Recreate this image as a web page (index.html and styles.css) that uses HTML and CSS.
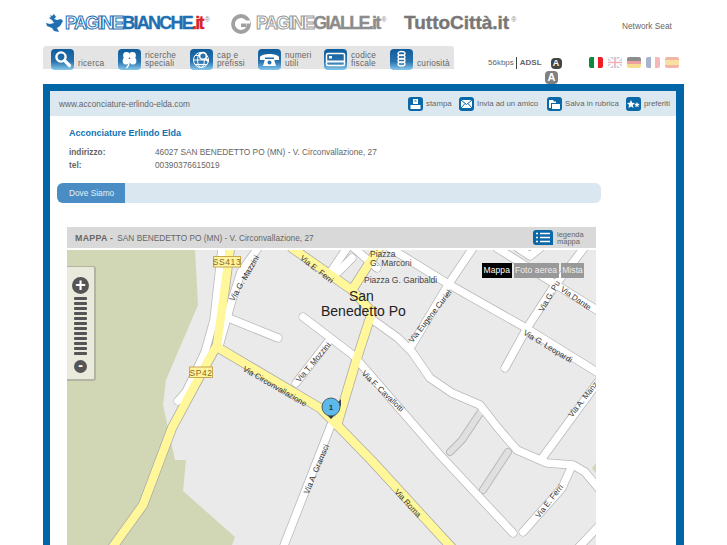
FILE: index.html
```html
<!DOCTYPE html>
<html lang="en">
  <head>
    <title>Acconciature Erlindo Elda</title>
    <link rel="stylesheet" href="styles.css">
  </head>
  <body>
    <div class="page">
      <div class="logos">
        <div class="logo logo-pb">
          <svg class="logo-mark" width="18" height="19" viewBox="0 0 18 19"><path fill="#1f6fb2" d="M9 0l2 3-2 2 3 1 4-1 2 2-3 5-3 2 2 4-5-1-2-3-5-2-1-3 4 1 4-1-2-3-3-2 2-1-1-2 2 1z"/></svg>
          <span class="logo-name"><span class="outline">PAGINE</span>BIANCHE<span class="red">.it</span></span><sup class="reg">®</sup>
        </div>
        <div class="logo logo-pg">
          <svg class="logo-mark" width="20" height="20" viewBox="0 0 20 20"><circle cx="10" cy="10" r="8" fill="none" stroke="#a0a0a0" stroke-width="3.800"/><path d="M10 6.500h9v3h-9z" fill="#fff"/><path d="M10 9.500h5.500v3.500H10z" fill="#a0a0a0"/></svg>
          <span class="logo-name"><span class="outline">PAGINE</span>GIALLE.it</span><sup class="reg">®</sup>
        </div>
        <div class="logo logo-tc">
          <span class="logo-name">TuttoCittà.it</span><sup class="reg">®</sup>
        </div>
        <div class="network">Network Seat</div>
      </div>

      <div class="toprow">
        <div class="nav">
          <a class="nav-item">
            <span class="nav-icon"><svg width="23" height="21" viewBox="0 0 23 21"><circle cx="10" cy="8" r="4.600" fill="none" stroke="#fff" stroke-width="2.400"/><path d="M13.500 11.500l5 5" stroke="#fff" stroke-width="3.200" stroke-linecap="round"/></svg></span>
            <span class="nav-label">ricerca</span>
          </a>
          <a class="nav-item">
            <span class="nav-icon"><svg width="23" height="21" viewBox="0 0 23 21"><g fill="#fff"><circle cx="8.500" cy="6.500" r="3.400"/><circle cx="14.500" cy="6.500" r="3.400"/><circle cx="8" cy="12" r="3.400"/><circle cx="15" cy="12" r="3.400"/></g><path d="M11.500 10c0 4-1 7-3 9" stroke="#fff" stroke-width="1.400" fill="none"/></svg></span>
            <span class="nav-label">ricerche<br>speciali</span>
          </a>
          <a class="nav-item">
            <span class="nav-icon"><svg width="23" height="21" viewBox="0 0 23 21"><g fill="none" stroke="#fff"><circle cx="11" cy="11" r="7.500"/><ellipse cx="11" cy="11" rx="3.400" ry="7.500"/><path d="M3.500 11h15M5 6.500h12M5 15.500h12"/></g><circle cx="13" cy="7" r="3.400" fill="#2a72ad" stroke="#fff" stroke-width="1.600"/><path d="M15.500 9.500l3 3" stroke="#fff" stroke-width="2"/></svg></span>
            <span class="nav-label">cap e<br>prefissi</span>
          </a>
          <a class="nav-item">
            <span class="nav-icon"><svg width="23" height="21" viewBox="0 0 23 21"><path fill="#fff" d="M2 8c2-4 17-4 19 0v3h-5V8.500H7V11H2z"/><path fill="#fff" d="M7 10h9l2 7H5z"/><circle cx="11.500" cy="13.500" r="2" fill="#2a72ad"/></svg></span>
            <span class="nav-label">numeri<br>utili</span>
          </a>
          <a class="nav-item">
            <span class="nav-icon"><svg width="23" height="21" viewBox="0 0 23 21"><rect x="2.500" y="4.500" width="18" height="12" rx="1.500" fill="none" stroke="#fff" stroke-width="1.500"/><path d="M3 12.500h17" stroke="#fff" stroke-width="2"/><rect x="5" y="7" width="3" height="2.500" fill="#fff"/></svg></span>
            <span class="nav-label">codice<br>fiscale</span>
          </a>
          <a class="nav-item">
            <span class="nav-icon"><svg width="23" height="21" viewBox="0 0 23 21"><g fill="none" stroke="#fff" stroke-width="1.300"><ellipse cx="11.500" cy="4.500" rx="3.500" ry="2"/><ellipse cx="11.500" cy="8" rx="3.500" ry="2"/><ellipse cx="11.500" cy="11.500" rx="3.500" ry="2"/><ellipse cx="11.500" cy="15" rx="3.500" ry="2"/></g></svg></span>
            <span class="nav-label">curiosità</span>
          </a>
        </div>

        <div class="speed">
          <div class="speed-line">
            <span>56kbps</span><span class="speed-sep">ADSL</span>
            <span class="font-a font-a-dark">A</span>
          </div>
          <span class="font-a font-a-grey">A</span>
        </div>

        <div class="flags">
          <span class="flag flag-it"></span>
          <span class="flag flag-en"><svg width="14" height="11" viewBox="0 0 14 11"><rect width="14" height="11" fill="#c6d0e2"/><path d="M0 0l14 11M14 0L0 11" stroke="#fff" stroke-width="2"/><path d="M7 0v11M0 5.500h14" stroke="#fff" stroke-width="3.400"/><path d="M7 0v11M0 5.500h14" stroke="#eeb0b4" stroke-width="1.600"/></svg></span>
          <span class="flag flag-de"></span>
          <span class="flag flag-fr"></span>
          <span class="flag flag-es"></span>
        </div>
      </div>

      <div class="box">
        <div class="strip">
          <span class="url">www.acconciature-erlindo-elda.com</span>
          <div class="tools">
            <a class="tool">
              <span class="tool-icon"><svg width="15" height="14" viewBox="0 0 15 14"><path fill="#fff" d="M5 2h5v5H5zM2.500 8h10v4h-10z"/><path d="M6.500 4h2" stroke="#0a68a8"/></svg></span>
              <span class="tool-label">stampa</span>
            </a>
            <a class="tool">
              <span class="tool-icon"><svg width="15" height="14" viewBox="0 0 15 14"><rect x="2" y="3" width="11" height="8" fill="#fff"/><path d="M2 3l5.500 4.500L13 3M2 11l4-4.500M13 11L9 6.500" fill="none" stroke="#0a68a8"/></svg></span>
              <span class="tool-label">Invia ad un amico</span>
            </a>
            <a class="tool">
              <span class="tool-icon"><svg width="15" height="14" viewBox="0 0 15 14"><path fill="#fff" d="M2 3h4l1 1.500H9V6H4v5H2z"/><path fill="#fff" d="M5 7h8v5H5z"/></svg></span>
              <span class="tool-label">Salva in rubrica</span>
            </a>
            <a class="tool">
              <span class="tool-icon"><svg width="15" height="14" viewBox="0 0 15 14"><path fill="#fff" d="M5 3l1.200 2.700 2.800.3-2.100 2 .6 2.900L5 9.500l-2.500 1.400.6-2.900L1 6l2.800-.3zM11 5l.8 1.800 1.900.2-1.400 1.300.4 2-1.700-1-1.700 1 .4-2L8.300 7l1.900-.2z"/></svg></span>
              <span class="tool-label">preferiti</span>
            </a>
          </div>
        </div>

        <h1 class="name">Acconciature Erlindo Elda</h1>
        <div class="info">
          <span class="info-key">indirizzo:</span>
          <span>46027 SAN BENEDETTO PO (MN) - V. Circonvallazione, 27</span>
          <span class="info-key">tel:</span>
          <span>00390376615019</span>
        </div>

        <div class="tabs">
          <a class="tab">Dove Siamo</a>
        </div>

        <div class="map-head">
          <span class="map-title">MAPPA -</span>
          <span class="map-addr">SAN BENEDETTO PO (MN) - V. Circonvallazione, 27</span>
          <svg class="legend-icon" width="20" height="15" viewBox="0 0 20 15"><path fill="#0a68a8" d="M3 0h14q3 0 3 3v12H3q-3 0-3-3V3q0-3 3-3z"/><path d="M3 3.500h2M7 3.500h10M3 7.500h2M7 7.500h10M3 11.500h2M7 11.500h10" stroke="#fff" stroke-width="1.500"/></svg>
          <span class="legend-label">legenda<br>mappa</span>
        </div>

        <div class="map">
          <svg class="map-canvas" width="529" height="295" viewBox="67 250 529 295">
            <defs>
              <g id="streets">
                <path d="M222 248L214 320 205 352 186 392 178 401"/>
                <path d="M258 248L241 272 232 300 219 346"/>
                <path d="M231 319L278 338"/>
                <path d="M347 248L330 273"/>
                <path d="M354 248L377 268M352 258L338 272"/>
                <path d="M390 248L450 285 526 328 600 374"/>
                <path d="M473 248L448 285 412 345"/>
                <path d="M373 320L398 338 412 352 430 378 452 393 480 405 498 428 517 450 547 463 573 465 585 472 600 490"/>
                <path d="M303 317L353 355 440 455 513 533"/>
                <path d="M328 342L296 383"/>
                <path d="M331 425L283 548"/>
                <path d="M584 248L553 288 527 328 505 368"/>
                <path d="M497 248L600 312"/>
                <path d="M518 248L530 256 540 248"/>
                <path d="M598 382L543 457"/>
                <path d="M570 470L562 488 523 532"/>
                <path d="M578 548L600 525"/>
              </g>
              <g id="alleys">
                <path d="M480 413L462 440 450 452"/>
                <path d="M508 452L483 490"/>
              </g>
              <g id="mainroads">
                <path d="M230 248L226 280 217 345 195 385 172 428 143 505 112 548"/>
                <path d="M217 347L320 408 340 428 373 462 452 548"/>
                <path d="M292 248L352 290 372 312 357 358 337 425"/>
                <path d="M379 248L352 290"/>
              </g>
            </defs>

            <rect x="67" y="250" width="529" height="295" fill="#eaeaea"/>
            <path class="land" d="M67 250H195L198 305 166 380 163 405 175 460H186L183 491 235 537 232 545H67z"/>
            <path class="land" d="M592 468L597 462V475z"/>

            <use href="#streets" class="street-edge"/>
            <use href="#alleys" class="alley-edge"/>
            <use href="#mainroads" class="main-edge"/>
            <use href="#alleys" class="alley"/>
            <use href="#streets" class="street"/>
            <use href="#mainroads" class="main"/>

            <g class="shield">
              <rect x="213.500" y="256.500" width="27" height="10.500"/>
              <text x="227" y="265">SS413</text>
              <rect x="189.500" y="367" width="23" height="10.500"/>
              <text x="201" y="375.500">SP42</text>
            </g>

            <g class="road-label">
              <text transform="translate(244 278) rotate(-60)" y="3">Via G. Mazzini</text>
              <text transform="translate(317 269) rotate(38)" y="3">Via E. Ferri</text>
              <text transform="translate(275 386) rotate(30)" y="3">Via Circonvallazione</text>
              <text transform="translate(313 362) rotate(-50)" y="3">Via T. Mozzini</text>
              <text transform="translate(430 316) rotate(-52)" y="3">Via Eugene Curiel</text>
              <text transform="translate(549 296) rotate(-60)" y="3">Via G. Pu</text>
              <text transform="translate(576 298) rotate(35)" y="3">Via Dante</text>
              <text transform="translate(548 346) rotate(31)" y="3">Via G. Leopardi</text>
              <text transform="translate(383 391) rotate(44)" y="3">Via F. Cavallotti</text>
              <text transform="translate(316 469) rotate(-67)" y="3">Via A. Gramsci</text>
              <text transform="translate(408 503) rotate(47)" y="3">Via Roma</text>
              <text transform="translate(549 501) rotate(-52)" y="3">Via E. Ferri</text>
              <text transform="translate(586 395) rotate(-52)" y="3">Via A. Manzoni</text>
            </g>

            <g class="place-label">
              <text x="370" y="257">Piazza</text>
              <text x="370" y="266">G. Marconi</text>
              <text x="364" y="283">Piazza G. Garibaldi</text>
            </g>
            <g class="town-label">
              <text x="349" y="301">San</text>
              <text x="321" y="316">Benedetto Po</text>
            </g>

            <path d="M338 402l3 -3v8z" fill="#444"/>
            <path d="M327 415h8l-4 4z" fill="#333"/>
            <circle cx="331" cy="407" r="9" fill="#5db9ea" stroke="#47606e" stroke-width="1"/>
            <text class="marker-num" x="331" y="410">1</text>
          </svg>

          <div class="zoom-ctl">
            <span class="zoom-btn zoom-plus">+</span>
            <div class="zoom-bars">
              <i></i><i></i><i></i><i></i><i></i><i></i><i></i><i></i><i></i><i></i><i></i><i></i>
            </div>
            <span class="zoom-btn zoom-minus">-</span>
          </div>

          <div class="map-types">
            <a class="map-type map-type-on">Mappa</a>
            <a class="map-type">Foto aerea</a>
            <a class="map-type">Mista</a>
          </div>
        </div>
      </div>
    </div>
  </body>
</html>
```

FILE: styles.css
```css
html, body {
  margin: 0;
  height: 545px;
  overflow: hidden;
  background: white;
}

body {
  font-family: "Liberation Sans", Arial, sans-serif;
  font-size: 8.300px;
  color: #666;
}

.page {
  width: 641px;
  margin-left: 43px;
}

/* logos */
.logos {
  display: flex;
  height: 46px;
  position: relative;
}

.logo {
  display: flex;
  align-items: flex-start;
  padding-top: 12px;
  box-sizing: border-box;
}

.logo-pb {
  width: 188px;
  padding-left: 2px;
}

.logo-pg {
  width: 173px;
}

.logo-tc {
  width: 218px;
}

.logo-mark {
  margin-top: 2px;
  margin-right: 2px;
  flex: none;
}

.logo-pg .logo-mark {
  margin-right: 5px;
}

.logo-name {
  font-weight: bold;
  font-size: 18px;
  line-height: 22px;
  letter-spacing: -1.750px;
  white-space: nowrap;
}

.logo-pb .logo-name {
  color: #1f6fb2;
  -webkit-text-stroke: 0.3px #1f6fb2;
}

.logo-pg .logo-name {
  color: #8c8c8c;
  -webkit-text-stroke: 0.3px #8c8c8c;
}

.logo-tc .logo-name {
  color: #777;
  font-size: 19px;
  letter-spacing: 0;
  -webkit-text-stroke: 0.4px #777;
}

.logo .outline {
  color: white;
  -webkit-text-stroke: 1px #1f6fb2;
}

.logo-pg .outline {
  -webkit-text-stroke-color: #999;
}

.logo .red {
  color: #d8232a;
  -webkit-text-stroke-color: #d8232a;
}

.reg {
  font-size: 7px;
  line-height: 8px;
  margin: 4px 0 0 2px;
  color: #888;
}

.network {
  position: absolute;
  left: 579px;
  top: 21px;
  white-space: nowrap;
  color: #666;
}

/* top row */
.toprow {
  display: flex;
  height: 38px;
}

.nav {
  display: grid;
  grid-template-columns: 67px 72px 68px 66px 66px 1fr;
  width: 403px;
  height: 23px;
  padding-left: 8px;
  background: #e4e4e4;
  border-radius: 3px 3px 0 0;
}

.nav-item {
  display: flex;
  align-items: flex-end;
  height: 23px;
}

.nav-icon {
  display: block;
  width: 23px;
  height: 21px;
  margin-bottom: -1px;
  border-radius: 4px;
  background: linear-gradient(#0f5d9c, #2a72ad 60%, #86c8ec);
  flex: none;
}

.nav-icon svg {
  display: block;
}

.nav-label {
  margin-left: 4px;
  margin-bottom: 2px;
  font-size: 8.300px;
  line-height: 8px;
  letter-spacing: 0.2px;
  color: #666;
}

.speed {
  position: relative;
  width: 101px;
  margin-left: 34px;
  padding-top: 11px;
}

.speed-line {
  display: flex;
  align-items: center;
  font-size: 8px;
  line-height: 12px;
}

.speed-sep {
  margin-left: 2px;
  padding-left: 3px;
  border-left: 1px solid #444;
  font-weight: bold;
}

.font-a {
  display: block;
  text-align: center;
  font-weight: bold;
  color: white;
  border-radius: 4px;
}

.font-a-dark {
  width: 11px;
  height: 11px;
  margin-left: 9px;
  font-size: 9px;
  line-height: 11px;
  background: #444;
}

.font-a-grey {
  width: 13px;
  height: 13px;
  margin: 2px 0 0 57px;
  font-size: 11px;
  line-height: 13px;
  background: #808080;
}

.flags {
  display: flex;
  gap: 5px;
  padding-top: 11px;
}

.flag {
  display: block;
  width: 14px;
  height: 11px;
  border-radius: 2px;
  overflow: hidden;
}

.flag svg {
  display: block;
}

.flag-it {
  background: linear-gradient(90deg, #0a8a3a 33%, #fff 33%, #fff 66%, #ee1c25 66%);
}

.flag-de {
  background: linear-gradient(#8c8c8c 33%, #eea0a0 33%, #eea0a0 66%, #f7dc90 66%);
}

.flag-fr {
  background: linear-gradient(90deg, #a8b4cc 33%, #fff 33%, #fff 66%, #f5b8b8 66%);
}

.flag-es {
  background: linear-gradient(#f5b4a8 28%, #f8e0a0 28%, #f8e0a0 72%, #f5b4a8 72%);
}

/* main box */
.box {
  height: 461px;
  box-sizing: border-box;
  border: solid #0066a8;
  border-width: 7px 8px 0 7px;
}

.strip {
  display: flex;
  align-items: center;
  justify-content: space-between;
  height: 25px;
  padding: 0 0 0 9px;
  background: #dce8f0;
}

.tools {
  display: grid;
  grid-template-columns: 51px 88px 79px 50px;
}

.tool {
  display: flex;
  align-items: center;
}

.tool-icon {
  display: block;
  width: 15px;
  height: 14px;
  border-radius: 3px;
  background: #0a68a8;
}

.tool-icon svg {
  display: block;
}

.tool-label {
  margin-left: 3px;
  font-size: 7.800px;
  white-space: nowrap;
}

.name {
  margin: 11px 0 0 19px;
  font-size: 9px;
  line-height: 12px;
  color: #0f72b4;
}

.info {
  display: grid;
  grid-template-columns: 86px 1fr;
  row-gap: 3px;
  margin: 8px 0 0 19px;
  line-height: 10px;
}

.info-key {
  font-weight: bold;
}

.tabs {
  width: 544px;
  height: 20px;
  margin: 13px 0 0 7px;
  border-radius: 6px;
  background: #dae6f0;
}

.tab {
  display: block;
  width: 56px;
  height: 20px;
  padding-left: 12px;
  border-radius: 6px 0 0 6px;
  background: #4a8cc4;
  color: #e6f0f8;
  line-height: 20px;
}

.map-head {
  display: flex;
  align-items: center;
  width: 521px;
  height: 21px;
  margin: 24px 0 0 17px;
  padding-left: 8px;
  background: #d9d9d9;
}

.map-title {
  font-weight: bold;
  font-size: 8.800px;
  letter-spacing: 0.3px;
}

.map-addr {
  margin-left: 4px;
  flex: 1;
}

.legend-icon {
  flex: none;
  margin-right: 4px;
}

.legend-label {
  width: 39px;
  font-size: 7.500px;
  line-height: 7px;
}

/* map */
.map {
  position: relative;
  width: 529px;
  height: 295px;
  margin: 2px 0 0 17px;
  overflow: hidden;
}

.map-canvas {
  display: block;
}

.land {
  fill: #d1d7b5;
}

.street-edge, .alley-edge, .main-edge,
.street, .alley, .main {
  fill: none;
  stroke-linecap: round;
  stroke-linejoin: round;
}

.street-edge {
  stroke: #b8b8b8;
  stroke-width: 9px;
}

.street {
  stroke: white;
  stroke-width: 7.500px;
}

.alley-edge {
  stroke: #b8b8b8;
  stroke-width: 8px;
}

.alley {
  stroke: #e0e0e0;
  stroke-width: 6px;
}

.main-edge {
  stroke: #aaa;
  stroke-width: 10px;
}

.main {
  stroke: #fff799;
  stroke-width: 8.500px;
}

.shield rect {
  fill: #fff3a0;
  stroke: #c9a850;
}

.shield text {
  font-size: 8.500px;
  letter-spacing: 0.6px;
  fill: #8a6a20;
  text-anchor: middle;
}

.road-label text {
  font-size: 8px;
  fill: #333;
  text-anchor: middle;
}

.place-label text {
  font-size: 8.500px;
  fill: #444;
}

.town-label text {
  font-size: 14px;
  fill: #222;
}

.marker-num {
  font-size: 8px;
  font-weight: bold;
  fill: #1d3c50;
  text-anchor: middle;
}

.zoom-ctl {
  position: absolute;
  left: 0;
  top: 16px;
  width: 29px;
  height: 115px;
  box-sizing: border-box;
  padding-top: 10px;
  display: flex;
  flex-direction: column;
  align-items: center;
  background: #e9e9dc;
  border: solid #b4b4a4;
  border-width: 1px 2px 2px 0;
  border-radius: 0 3px 3px 0;
}

.zoom-btn {
  display: block;
  border-radius: 50%;
  background: #555;
  color: white;
  font-weight: bold;
  text-align: center;
}

.zoom-plus {
  width: 17px;
  height: 17px;
  font-size: 18px;
  line-height: 17px;
}

.zoom-minus {
  width: 13px;
  height: 13px;
  margin-top: 5px;
  font-size: 14px;
  line-height: 11px;
}

.zoom-bars {
  display: flex;
  flex-direction: column;
  gap: 2px;
  margin-top: 3px;
}

.zoom-bars i {
  display: block;
  width: 13px;
  height: 3px;
  border-radius: 1px;
  background: #555;
}

.map-types {
  position: absolute;
  left: 415px;
  top: 13px;
  display: flex;
  gap: 2px;
}

.map-type {
  display: block;
  height: 15px;
  padding: 0 1.500px;
  background: #999;
  color: #eee;
  font-size: 8.500px;
  letter-spacing: 0.1px;
  line-height: 15px;
  white-space: nowrap;
}

.map-type-on {
  background: black;
  color: white;
}
```
